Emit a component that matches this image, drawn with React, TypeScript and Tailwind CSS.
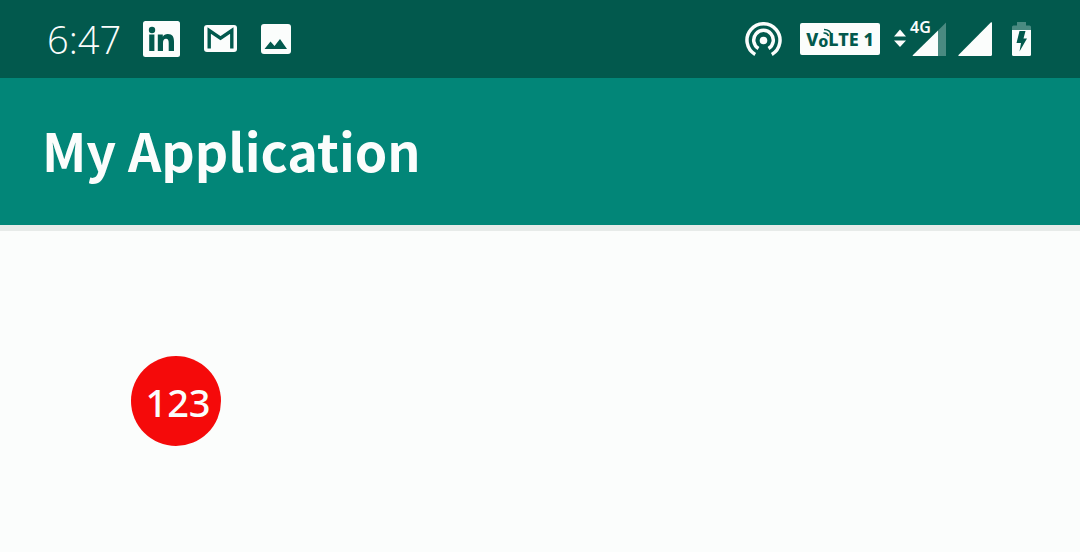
function LinkedInIcon() {
  return (
    <svg width="37" height="36" viewBox="0 0 37 36" role="img" aria-label="LinkedIn">
      <rect width="37" height="36" rx="2.5" fill="#fbfdfc" />
      <g fill="#02594d">
        <circle cx="9" cy="9" r="3.2" />
        <rect x="6.2" y="13.500" width="5.200" height="16.500" />
        <path d="M14.800 13.500h5v2.300c.9-1.600 2.600-2.700 5-2.700 4.800 0 6.200 3 6.200 7.600V30h-5.300v-8c0-2.300-.5-4.200-2.700-4.200-2.200 0-3 1.800-3 4.200V30h-5.200z" />
      </g>
    </svg>
  );
}

function MailIcon() {
  return (
    <svg width="33" height="27" viewBox="0 0 33 27" role="img" aria-label="Gmail">
      <rect width="33" height="27" rx="3" fill="#fbfdfc" />
      <path d="M5.200 23.500V5.500L16.500 13.200 27.800 5.500V23.500" fill="none" stroke="#02594d" strokeWidth="3.400" />
    </svg>
  );
}

function PictureIcon() {
  return (
    <svg width="30" height="30" viewBox="0 0 30 30" role="img" aria-label="Screenshot">
      <rect width="30" height="30" rx="3" fill="#fbfdfc" />
      <path d="M3.500 25L9.500 17.500 13.500 22 19 15 26 25z" fill="#02594d" />
    </svg>
  );
}

function HotspotIcon() {
  return (
    <svg width="37" height="34" viewBox="0 0 37 34" role="img" aria-label="Hotspot">
      <g fill="none" stroke="#fbfdfc" strokeWidth="3.500">
        <path d="M10.200 32.500A16.500 16.500 0 1 1 26.800 32.500" />
        <path d="M13.500 26.600A9.800 9.800 0 1 1 23.500 26.600" />
      </g>
      <circle cx="18.500" cy="18.500" r="3.800" fill="#fbfdfc" />
    </svg>
  );
}

function VolteBadge() {
  return (
    <div className="flex h-8 w-20 items-center justify-center rounded-xs bg-[#fbfdfc] text-lg leading-8 font-extrabold text-[#02594d]">
      <span>V</span>
      <span className="relative self-end text-base leading-7">
        o
        <svg className="absolute top-0 left-1" width="13" height="12" viewBox="0 0 13 12" aria-hidden="true">
          <path d="M2 2.500Q8 2.500 9.500 8M1.500 6Q5.500 5.500 6.500 9" fill="none" stroke="#02594d" strokeWidth="1.500" />
        </svg>
      </span>
      <span className="whitespace-pre">LTE 1</span>
    </div>
  );
}

function MobileData() {
  return (
    <div className="relative h-8.5 w-13">
      <svg width="52" height="34" viewBox="0 0 52 34" role="img" aria-label="4G signal">
        <path d="M0 14.500L6 7.500 12 14.500zM0 18.500H12L6 25z" fill="#fbfdfc" />
        <path d="M44 8.500L52 0.500V34H44z" fill="#4a8a81" />
        <path d="M18.500 33.500L44 8.500V34H19z" fill="#fbfdfc" />
      </svg>
      <span className="absolute -top-1 left-4 text-base leading-4.5 font-semibold">4G</span>
    </div>
  );
}

function SignalIcon() {
  return (
    <svg width="34" height="34" viewBox="0 0 34 34" role="img" aria-label="Signal">
      <path d="M0.500 33L33 0.300Q34 0 34 1V32.500Q34 34 32.500 34H1Q-.2 34 .5 33z" fill="#fbfdfc" />
    </svg>
  );
}

function BatteryIcon() {
  return (
    <svg width="19" height="34" viewBox="0 0 19 34" role="img" aria-label="Battery charging">
      <path d="M0 8V5Q0 3.500 1.500 3.500H5V0H14V3.500H17.500Q19 3.500 19 5V8z" fill="#4a8a81" />
      <path d="M0 8H19V32.500Q19 34 17.500 34H1.500Q0 34 0 32.500z" fill="#fbfdfc" />
      <path d="M7.500 9H13.500L11.500 16.500H15L7.500 29.500 9 21H4.500z" fill="#02594d" />
    </svg>
  );
}

export default function App() {
  return (
    <div className="flex min-h-screen flex-col bg-[#fbfdfc] font-['Noto_Sans',sans-serif] text-[#fbfdfc]">
      <div className="flex h-[78px] items-center justify-between bg-[#02594d] pr-[49px] pb-px pl-[47px]">
        <div className="flex items-center">
          <time className="font-['Open_Sans',sans-serif] text-[38px] leading-10 font-[350]">6:47</time>
          <div className="ml-[22px] flex items-center gap-6">
            <LinkedInIcon />
            <MailIcon />
            <PictureIcon />
          </div>
        </div>
        <div className="flex items-center">
          <HotspotIcon />
          <div className="ml-4.5 flex items-center gap-3.5">
            <VolteBadge />
            <MobileData />
          </div>
          <div className="ml-3 flex items-center gap-5">
            <SignalIcon />
            <BatteryIcon />
          </div>
        </div>
      </div>
      <header className="flex h-[147px] items-center bg-[#028678] px-[42px] pb-1">
        <h1 className="font-['Noto_Sans_CJK_SC',sans-serif] text-[52px] leading-16 font-bold">My Application</h1>
      </header>
      <main className="flex-1 border-t-6 border-[#e7ebe9] px-[131px] pt-[125px]">
        <div className="flex size-[90px] items-center justify-center rounded-full bg-[#f50a0a] pt-0.5 pl-1 text-[38px] leading-10 font-medium">
          123
        </div>
      </main>
    </div>
  );
}
